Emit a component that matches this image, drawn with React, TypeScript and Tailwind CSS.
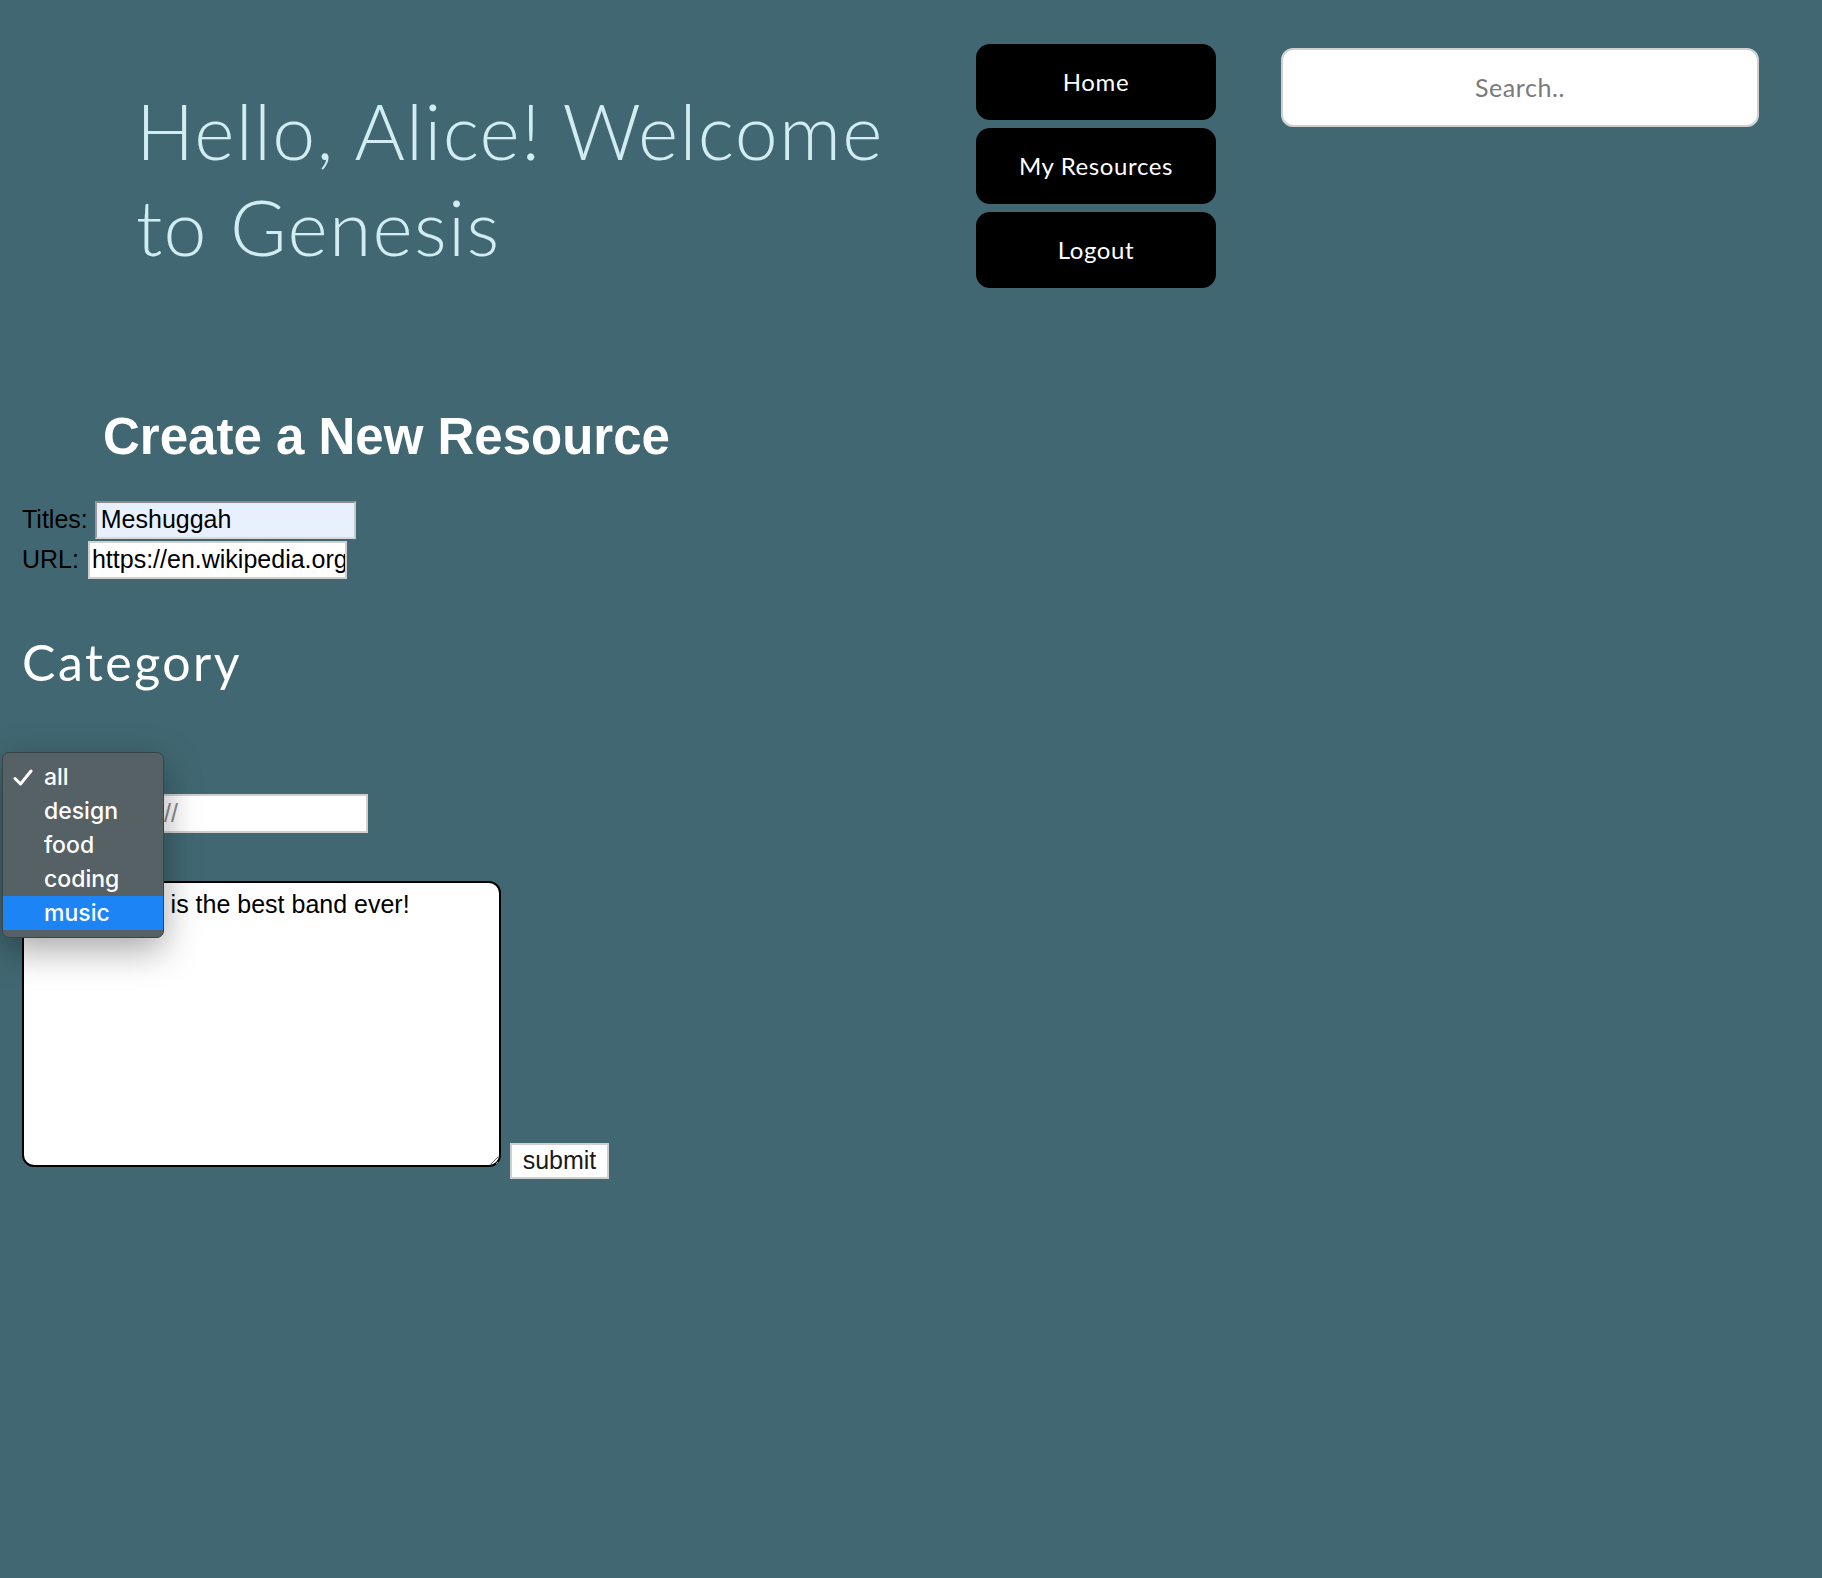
import React from "react";

const quick = { fontFamily: '"Lato", "Open Sans", sans-serif' };
const arial = { fontFamily: '"Liberation Sans", Arial, sans-serif' };
const sys = { fontFamily: '"Inter", "Roboto", sans-serif' };

export default function App() {
  const items = ["all", "design", "food", "coding", "music"];
  return (
    <div className="relative w-full min-h-[1578px] bg-[#416872] overflow-hidden">
      {/* Header */}
      <div className="flex items-start">
        <div className="w-[976px] pl-[136px] pt-[82px]">
          <h1
            className="text-[77px] leading-[96px] font-light tracking-[1.3px] text-[#d2ecf3] max-w-[800px]"
            style={quick}
          >
            Hello, Alice! Welcome to Genesis
          </h1>
        </div>
        <nav className="flex flex-col gap-[8px] pt-[44px] w-[240px]" style={quick}>
          {["Home", "My Resources", "Logout"].map((t) => (
            <button
              key={t}
              className="h-[76px] w-[240px] rounded-[14px] bg-black text-white text-[24px] tracking-[0.6px] flex items-center justify-center"
            >
              {t}
            </button>
          ))}
        </nav>
        <div className="ml-[65px] mt-[48px] w-[478px] h-[79px] border-2 border-[#cfcfcf] rounded-[12px] bg-white flex items-center justify-center">
          <span className="text-[25px] tracking-[0.6px] text-[#7a7a7a]" style={quick}>
            Search..
          </span>
        </div>
      </div>

      {/* Main form */}
      <div style={arial}>
        <h2 className="mt-[120px] pl-[103px] text-[51px] leading-[57px] font-bold text-white">
          Create a New Resource
        </h2>

        <div className="mt-[36px] pl-[22px] flex items-center h-[38px] text-[25px] text-black">
          <span>Titles:</span>
          <div className="ml-[7px] w-[261px] h-[38px] bg-[#e8f0fe] border-2 border-t-[#8a8a8a] border-l-[#9a9a9a] border-r-[#c8c8c8] border-b-[#d8d8d8] flex items-center pl-[4px]">
            Meshuggah
          </div>
        </div>
        <div className="mt-[2px] pl-[22px] flex items-center h-[38px] text-[25px] text-black">
          <span>URL:</span>
          <div className="ml-[9px] w-[259px] h-[38px] bg-white border-2 border-[#cfcfcf] flex items-center pl-[2px] overflow-hidden whitespace-nowrap">
            https://en.wikipedia.org/wiki/Meshuggah
          </div>
        </div>

        <h3
          className="mt-[53px] pl-[22px] text-[50px] leading-[60px] tracking-[2.5px] text-white"
          style={quick}
        >
          Category
        </h3>

        <div className="mt-[70px] h-[30px]" />

        <div className="mt-[2px] pl-[22px] flex items-center h-[39px] text-[25px] text-black">
          <span>Image:</span>
          <div className="ml-[12px] w-[258px] h-[39px] bg-white border-2 border-[#cfcfcf] flex items-center pl-[3px] text-[#8a8a8a]">
            http://
          </div>
        </div>

        <div className="mt-[48px] pl-[22px] flex items-end">
          <textarea
            className="w-[479px] h-[286px] border-2 border-black rounded-[12px] bg-white text-[25px] text-black pl-[8px] pt-[3px] indent-[1px] resize-y outline-none"
            style={arial}
            defaultValue="Meshuggah is the best band ever!"
          />
          <button className="ml-[9px] mb-[-12px] w-[99px] h-[36px] border-2 border-[#cfcfcf] bg-white text-[25px] leading-[28px] text-[#1a1a1a] flex items-start justify-center pt-[1px]">
            submit
          </button>
        </div>
      </div>

      {/* Open select dropdown */}
      <div
        className="absolute left-[2px] top-[752px] w-[162px] h-[186px] rounded-[7px] bg-[#566165] border border-[#3a4346] shadow-[0_12px_36px_rgba(0,0,0,0.35)] pt-[7px]"
        style={sys}
      >
        {items.map((it) => (
          <div
            key={it}
            className={
              it === "music"
                ? "relative h-[34px] flex items-center pl-[41px] text-[23px] font-medium text-white bg-[#1d84f6]"
                : "relative h-[34px] flex items-center pl-[41px] text-[23px] font-medium text-white"
            }
          >
            {it === "all" && (
              <svg
                className="absolute left-[10px] top-[9px]"
                width="20"
                height="17"
                viewBox="0 0 20 17"
                fill="none"
              >
                <path
                  d="M2 9.5 L7.5 15 L18 2"
                  stroke="white"
                  strokeWidth="3"
                  strokeLinecap="round"
                  strokeLinejoin="round"
                />
              </svg>
            )}
            {it}
          </div>
        ))}
      </div>
    </div>
  );
}
